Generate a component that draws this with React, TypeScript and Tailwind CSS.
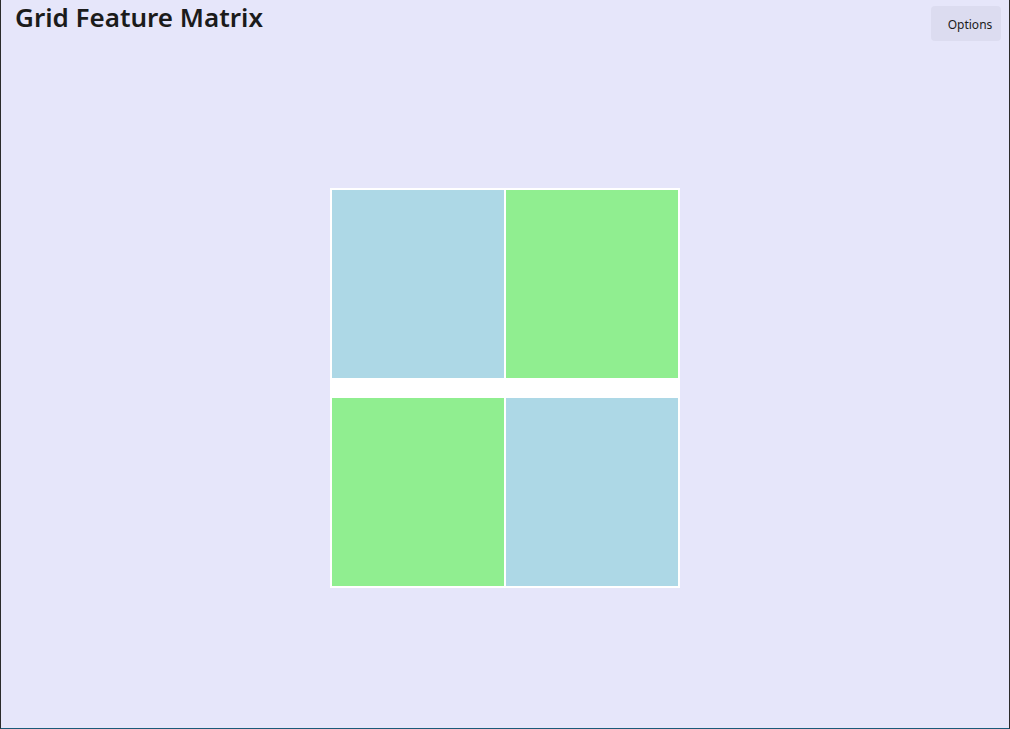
import React from 'react';

const cells = ['bg-[#add8e6]', 'bg-[#90ee90]', 'bg-[#90ee90]', 'bg-[#add8e6]'];

export default function App() {
  return (
    <div className="h-[729px] w-[1010px] flex flex-col bg-[#e6e6fa] border-l border-r border-b border-l-[#2b2b2b] border-r-[#2b2b2b] border-b-[#1b5a78] font-['Noto_Sans',sans-serif] text-[#1b1b1b] overflow-hidden">
      {/* Header */}
      <header className="h-[47px] flex items-start justify-between">
        <h1 className="ml-[14px] mt-[-3px] text-[26px] font-semibold leading-[40px]">Grid Feature Matrix</h1>
        <button className="mt-[6px] mr-[8px] w-[70px] h-[35px] rounded-[4px] bg-[#dcdcf0] text-[12px] pl-[8px] pt-[3px] flex items-center justify-center">
          Options
        </button>
      </header>

      {/* Matrix */}
      <main className="flex-1 flex items-center justify-center">
        <div className="grid grid-cols-[172px_172px] grid-rows-[188px_188px] gap-x-[2px] gap-y-[20px] p-[2px] bg-white">
          {cells.map((c, i) => (
            <div key={i} className={c} />
          ))}
        </div>
      </main>
    </div>
  );
}
